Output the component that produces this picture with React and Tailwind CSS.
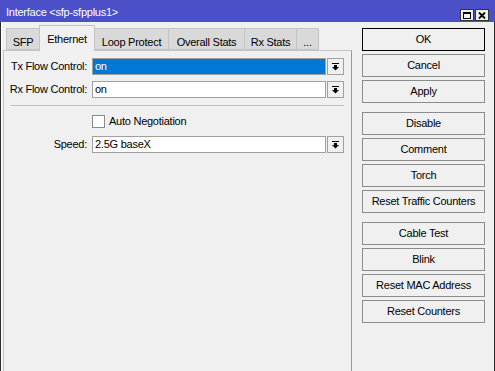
import { useState } from "react";

const tabs = [
  { name: "SFP", w: "w-[34px]" },
  { name: "Ethernet", w: "w-[56px]" },
  { name: "Loop Protect", w: "w-[75px]" },
  { name: "Overall Stats", w: "w-[77px]" },
  { name: "Rx Stats", w: "w-[53px]" },
  { name: "...", w: "w-[23px]" },
];

const buttonGroups = [
  ["OK", "Cancel", "Apply"],
  ["Disable", "Comment", "Torch", "Reset Traffic Counters"],
  ["Cable Test", "Blink", "Reset MAC Address", "Reset Counters"],
];

function DropArrow() {
  return (
    <svg width="7" height="8" viewBox="0 0 7 8">
      <rect x="0" y="0" width="7" height="1" fill="#000" />
      <rect x="2" y="2" width="3" height="2" fill="#000" />
      <polygon points="0,4 7,4 3.5,7.5" fill="#000" />
    </svg>
  );
}

function ComboRow({ label, value, selected }) {
  return (
    <div className="flex items-center h-[17px]">
      <div className="w-[84px] text-right pr-[1px]">{label}</div>
      <div
        className={
          "ml-[4px] w-[234px] h-[17px] border border-[#a0a0a0] flex items-center pl-[2px] " +
          (selected ? "bg-[#0078d7] text-white" : "bg-white")
        }
      >
        {value}
      </div>
      <div className="ml-[1px] w-[17px] h-[17px] border border-[#a0a0a0] bg-[#f0f0f0] flex items-center justify-center">
        <DropArrow />
      </div>
    </div>
  );
}

export default function App() {
  const [tab, setTab] = useState("Ethernet");

  return (
    <div className="w-[495px] h-[371px] overflow-hidden bg-[#f0f0f0] flex flex-col text-[11px] tracking-[-0.25px] text-black font-['Liberation_Sans',Arial,sans-serif]">
      {/* title bar */}
      <div className="h-[22px] shrink-0 bg-[#4b4fc8] flex items-start justify-between pl-[6px] pr-[6px]">
        <div className="text-white pt-[6px] leading-[13px]">Interface &lt;sfp-sfpplus1&gt;</div>
        <div className="flex gap-[1px] pt-[9px]">
          <div className="w-[14px] h-[12px] bg-[#f0f0f0] border border-[#333] flex items-center justify-center">
            <div className="w-[8px] h-[7px] border border-black border-t-2" />
          </div>
          <div className="w-[14px] h-[12px] bg-[#f0f0f0] border border-[#333] flex items-center justify-center">
            <svg width="8" height="7" viewBox="0 0 8 7">
              <path d="M1 0.5 L7 6.5 M7 0.5 L1 6.5" stroke="#000" strokeWidth="1.8" />
            </svg>
          </div>
        </div>
      </div>

      {/* body */}
      <div className="flex-1 flex border-l border-r border-[#2a2a2a]">
        <div className="flex-1 flex border-l border-white">
          {/* left tabbed panel */}
          <div className="ml-[1px] w-[349px] flex flex-col">
            <div className="h-[29px] -mb-px flex items-end pl-[3px]">
              {tabs.map((t) =>
                t.name === tab ? (
                  <div
                    key={t.name}
                    onClick={() => setTab(t.name)}
                    className={t.w + " h-[26px] -ml-px first:ml-0 relative z-10 bg-[#f0f0f0] border border-b-0 border-[#c4c4c4] flex justify-center pt-[5px]"}
                  >
                    {t.name}
                  </div>
                ) : (
                  <div
                    key={t.name}
                    onClick={() => setTab(t.name)}
                    className={t.w + " h-[22px] mb-px -ml-px first:ml-0 bg-[#d9d9d9] border border-[#c4c4c4] flex justify-center pt-[5px]"}
                  >
                    {t.name}
                  </div>
                )
              )}
            </div>
            <div className="h-[340px] border border-[#c4c4c4] border-r-[#9a9a9a] pt-[7px]">
              <div className="flex flex-col gap-[6px]">
                <ComboRow label="Tx Flow Control:" value="on" selected />
                <ComboRow label="Rx Flow Control:" value="on" />
              </div>
              <div className="mt-[7px] ml-[7px] w-[333px] border-t border-[#c0c0c0]" />
              <div className="mt-[9px] flex items-center h-[13px] pl-[88px]">
                <div className="w-[13px] h-[13px] bg-white border border-[#8a8a8a]" />
                <span className="ml-[4px]">Auto Negotiation</span>
              </div>
              <div className="mt-[8px]">
                <ComboRow label="Speed:" value="2.5G baseX" />
              </div>
            </div>
          </div>

          {/* right buttons */}
          <div className="ml-[10px] w-[123px] pt-[6px] flex flex-col gap-[9px]">
            {buttonGroups.map((g, i) => (
              <div key={i} className="flex flex-col gap-[3px]">
                {g.map((b) => (
                  <div
                    key={b}
                    className={
                      "h-[23px] flex items-center justify-center bg-[#f0f0f0] border " +
                      (b === "OK" ? "border-black" : "border-[#8c8c8c]")
                    }
                  >
                    {b}
                  </div>
                ))}
              </div>
            ))}
          </div>
        </div>
      </div>
    </div>
  );
}
